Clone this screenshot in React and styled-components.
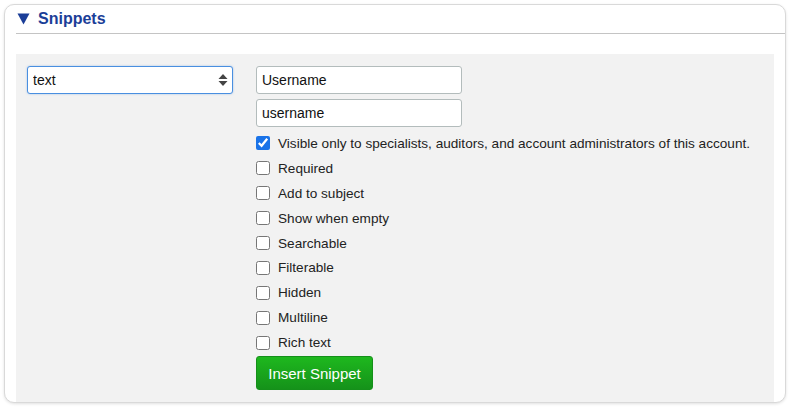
import styled, { createGlobalStyle } from 'styled-components';
import { useState } from 'react';

const GlobalStyle = createGlobalStyle`
  html, body {
    margin: 0;
    padding: 0;
    background: #ffffff;
  }
  body {
    font-family: Arial, "Liberation Sans", sans-serif;
    color: #222;
  }
`;

const options = [
  { key: 'visible', label: 'Visible only to specialists, auditors, and account administrators of this account.', checked: true },
  { key: 'required', label: 'Required' },
  { key: 'subject', label: 'Add to subject' },
  { key: 'empty', label: 'Show when empty' },
  { key: 'searchable', label: 'Searchable' },
  { key: 'filterable', label: 'Filterable' },
  { key: 'hidden', label: 'Hidden' },
  { key: 'multiline', label: 'Multiline' },
  { key: 'rich', label: 'Rich text' },
];

const App = () => {
  const [checks, setChecks] = useState(
    Object.fromEntries(options.map(o => [o.key, !!o.checked]))
  );

  return (
    <>
      <GlobalStyle />
      <Card>
        <Header>
          <svg width='13' height='12' viewBox='0 0 13 12'>
            <path d='M0.5 0.5 H12.5 L6.5 11.5 Z' fill='#1b3e98' />
          </svg>
          <h2>Snippets</h2>
        </Header>
        <Panel>
          <SelectWrap>
            <Select defaultValue='text'>
              <option value='text'>text</option>
              <option value='number'>number</option>
              <option value='date'>date</option>
            </Select>
            <SortIcon width='10' height='14' viewBox='0 0 10 14'>
              <path d='M5 1 L9.5 6 H0.5 Z' fill='#444' />
              <path d='M5 13 L9.5 8 H0.5 Z' fill='#444' />
            </SortIcon>
          </SelectWrap>
          <Fields>
            <TextInput defaultValue='Username' />
            <TextInput defaultValue='username' />
            <CheckList>
              {options.map(o => (
                <CheckRow key={o.key}>
                  <input
                    type='checkbox'
                    checked={checks[o.key]}
                    onChange={() => setChecks(prev => ({ ...prev, [o.key]: !prev[o.key] }))}
                  />
                  {o.label}
                </CheckRow>
              ))}
            </CheckList>
            <GreenButton>Insert Snippet</GreenButton>
          </Fields>
        </Panel>
      </Card>
    </>
  );
};

export default App;

const Card = styled.div`
  margin: 4px;
  height: 399px;
  box-sizing: border-box;
  border: 1px solid #d9d9d9;
  border-radius: 10px;
  box-shadow: 0 1px 3px rgba(0, 0, 0, 0.12);
  background: #fff;
  display: flex;
  flex-direction: column;
  overflow: hidden;
`;

const Header = styled.div`
  flex-shrink: 0;
  display: flex;
  align-items: center;
  gap: 8px;
  margin-left: 11px;
  padding-left: 1px;
  height: 28px;
  border-bottom: 1px solid #c4c4c4;
  color: #1b3e98;
  >h2 {
    margin: 0;
    font-size: 16px;
    font-weight: bold;
  }
`;

const Panel = styled.div`
  flex: 1;
  margin: 20px 11px 0 11px;
  background: #f2f2f2;
  padding: 12px 11px 0 11px;
  display: flex;
  align-items: flex-start;
  gap: 23px;
`;

const SelectWrap = styled.div`
  position: relative;
  width: 206px;
`;

const Select = styled.select`
  appearance: none;
  width: 100%;
  height: 28px;
  box-sizing: border-box;
  border: 1px solid #4a8fe0;
  border-radius: 3px;
  box-shadow: 0 0 2px rgba(74, 143, 224, 0.5);
  background: #fff;
  padding: 0 24px 0 5px;
  font-family: Arial, "Liberation Sans", sans-serif;
  font-size: 14px;
  color: #111;
  outline: none;
`;

const SortIcon = styled.svg`
  position: absolute;
  right: 5px;
  top: 7px;
  pointer-events: none;
`;

const Fields = styled.div`
  display: flex;
  flex-direction: column;
  align-items: flex-start;
  gap: 5px;
`;

const TextInput = styled.input`
  width: 206px;
  height: 28px;
  box-sizing: border-box;
  border: 1px solid #b3bcbc;
  border-radius: 3px;
  background: #fff;
  padding: 0 5px;
  font-family: Arial, "Liberation Sans", sans-serif;
  font-size: 14px;
  color: #111;
  outline: none;
`;

const CheckList = styled.div`
  display: flex;
  flex-direction: column;
  margin-top: -1px;
`;

const CheckRow = styled.label`
  display: flex;
  align-items: center;
  gap: 8px;
  height: 24.9px;
  font-size: 13.6px;
  white-space: nowrap;
  color: #222;
  >input {
    margin: 0;
    width: 14px;
    height: 14px;
    accent-color: #1a73e8;
  }
`;

const GreenButton = styled.button`
  margin-top: -4px;
  width: 117px;
  height: 34px;
  border: 1px solid #15901a;
  border-radius: 3px;
  background: linear-gradient(#1eb81e, #15921a);
  color: #fff;
  font-family: Arial, "Liberation Sans", sans-serif;
  font-size: 15px;
  cursor: pointer;
`;
